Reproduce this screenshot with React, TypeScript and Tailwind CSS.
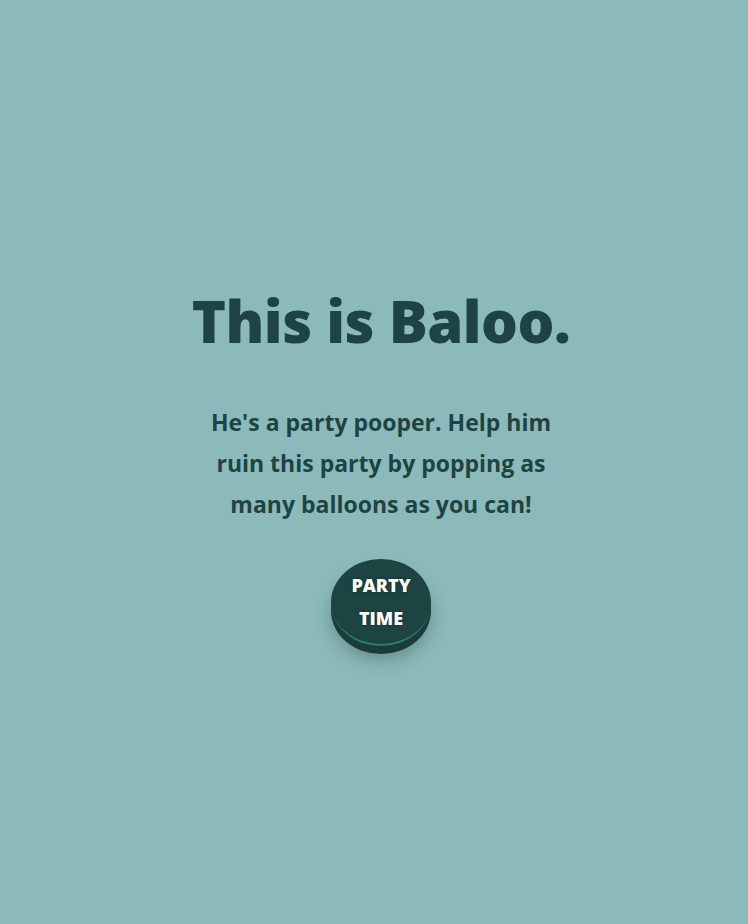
export default function App() {
  return (
    <div className="min-h-[924px] w-full bg-[#8cbabb] flex flex-col items-center pl-[14px] pt-[275px] text-[#1d4442] font-['Open_Sans',sans-serif]">
      <h1 className="text-[58px] font-extrabold leading-[92px] tracking-[-0.5px]">This is Baloo.</h1>
      <p className="mt-[35px] w-[352px] text-center text-[23px] font-bold leading-[41px]">
        He's a party pooper. Help him ruin this party by popping as many balloons as you can!
      </p>
      <div className="mt-[34px] relative">
        <button className="w-[100px] h-[87px] rounded-[50%] bg-[#1d4442] border-b-2 border-[#2b7d74] text-white font-extrabold text-[18px] leading-[33px] shadow-[0_8px_0_#1a3d3b,0_14px_18px_rgba(0,0,0,0.25)] [text-shadow:0_0_2px_#0c2624]">
          PARTY
          <br />
          TIME
        </button>
      </div>
    </div>
  );
}
